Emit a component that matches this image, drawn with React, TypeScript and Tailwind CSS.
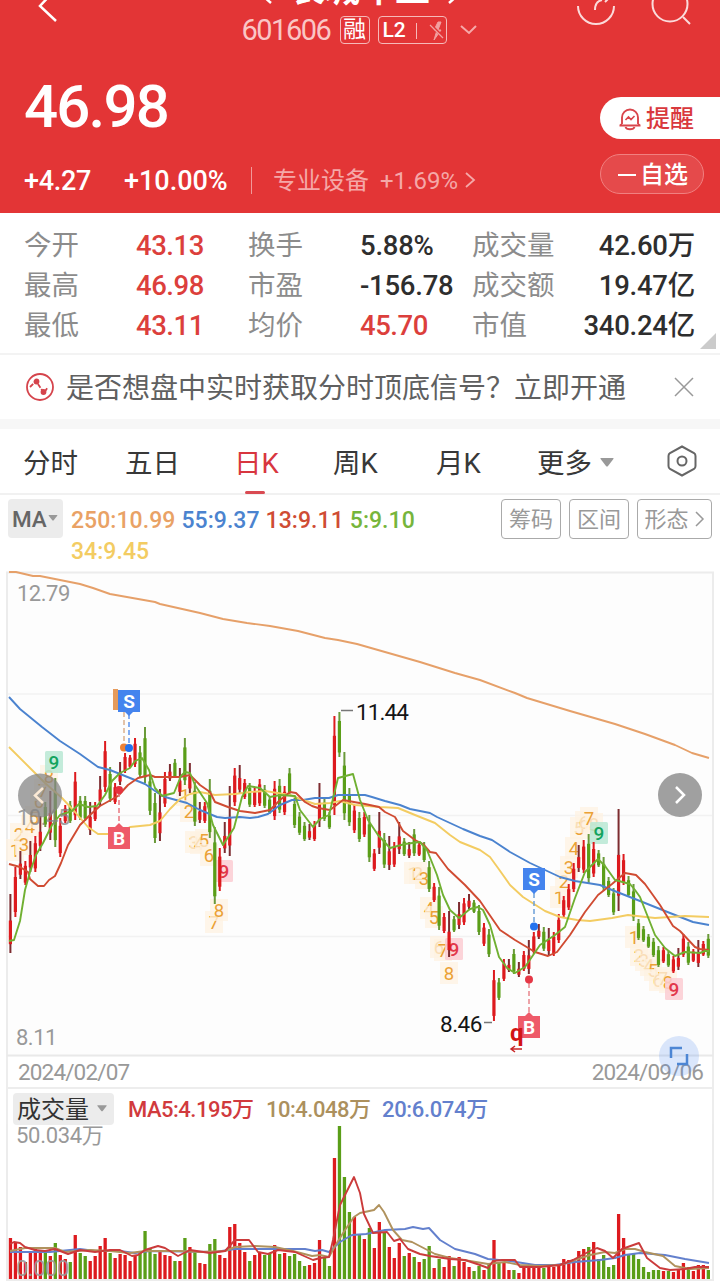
type Candle = [kind: "r" | "d" | "g", high: number, low: number, volumeTop: number];

const STEP = 4.985;
const FIRST_X = 10.4;

// kind: r = up, d = up with long wick, g = down
const candles: Candle[] = [
  ["d", 894, 953, 1238], ["r", 867, 917, 1242], ["d", 851, 879, 1247], ["r", 861, 885, 1262], ["d", 841, 872, 1252],
  ["r", 836, 872, 1248], ["d", 816, 851, 1253], ["g", 802, 827, 1251], ["d", 791, 840, 1256], ["g", 778, 847, 1243],
  ["r", 818, 857, 1255], ["r", 805, 823, 1259], ["g", 801, 823, 1262], ["r", 772, 820, 1235], ["g", 796, 820, 1253],
  ["g", 796, 821, 1256], ["d", 802, 835, 1261], ["r", 802, 821, 1256], ["d", 776, 806, 1246], ["r", 741, 792, 1238],
  ["g", 767, 802, 1253], ["r", 783, 804, 1258], ["d", 762, 785, 1254], ["r", 753, 773, 1255], ["r", 755, 768, 1261],
  ["r", 738, 767, 1256], ["g", 746, 778, 1253], ["g", 727, 783, 1231], ["g", 773, 815, 1248], ["g", 793, 843, 1254],
  ["d", 789, 841, 1252], ["r", 772, 807, 1255], ["d", 764, 781, 1256], ["g", 759, 778, 1261], ["d", 768, 796, 1261],
  ["g", 738, 785, 1238], ["d", 763, 793, 1247], ["g", 782, 826, 1251], ["d", 802, 823, 1263], ["r", 802, 823, 1264],
  ["g", 779, 838, 1244], ["g", 827, 904, 1239], ["r", 848, 891, 1255], ["d", 822, 853, 1258], ["d", 786, 856, 1227],
  ["r", 768, 806, 1224], ["d", 765, 794, 1243], ["r", 779, 799, 1252], ["g", 783, 807, 1261], ["r", 787, 807, 1255],
  ["r", 779, 806, 1252], ["g", 785, 808, 1255], ["g", 796, 814, 1253], ["r", 781, 820, 1245], ["g", 779, 813, 1254],
  ["r", 786, 815, 1253], ["g", 768, 795, 1256], ["g", 798, 828, 1254], ["g", 812, 835, 1261], ["g", 822, 841, 1266],
  ["d", 824, 840, 1265], ["r", 821, 841, 1263], ["d", 783, 827, 1240], ["g", 798, 821, 1257], ["g", 812, 829, 1266],
  ["r", 716, 815, 1158], ["g", 712, 757, 1126], ["g", 752, 820, 1177], ["g", 788, 826, 1212], ["r", 805, 833, 1217],
  ["g", 812, 842, 1235], ["r", 812, 837, 1239], ["g", 815, 862, 1228], ["r", 849, 871, 1248], ["d", 812, 854, 1222],
  ["g", 833, 868, 1232], ["d", 836, 870, 1247], ["r", 842, 867, 1258], ["d", 822, 854, 1243], ["g", 838, 856, 1256],
  ["d", 842, 858, 1253], ["g", 829, 856, 1257], ["r", 842, 856, 1262], ["g", 842, 862, 1259], ["g", 861, 892, 1246],
  ["r", 883, 902, 1268], ["g", 887, 930, 1259], ["r", 913, 933, 1267], ["d", 911, 957, 1256], ["g", 916, 932, 1266],
  ["d", 902, 929, 1257], ["r", 898, 925, 1262], ["d", 894, 909, 1267], ["g", 900, 913, 1271], ["g", 905, 935, 1266],
  ["r", 923, 946, 1270], ["g", 929, 957, 1264], ["r", 970, 1021, 1240], ["g", 978, 1000, 1263], ["r", 959, 981, 1262],
  ["d", 959, 972, 1270], ["g", 949, 974, 1270], ["d", 962, 977, 1273], ["r", 951, 971, 1267], ["d", 940, 974, 1267],
  ["r", 932, 954, 1267], ["d", 924, 939, 1266], ["g", 927, 951, 1268], ["d", 928, 955, 1267], ["r", 932, 956, 1267],
  ["r", 914, 943, 1266], ["r", 896, 917, 1259], ["r", 884, 910, 1260], ["r", 863, 892, 1259], ["d", 845, 872, 1251],
  ["r", 840, 873, 1249], ["g", 834, 883, 1247], ["r", 842, 877, 1242], ["g", 850, 867, 1259], ["g", 857, 891, 1255],
  ["g", 877, 897, 1267], ["g", 888, 915, 1265], ["d", 809, 911, 1214], ["r", 854, 885, 1238], ["g", 876, 897, 1255],
  ["g", 884, 921, 1253], ["g", 919, 940, 1259], ["g", 926, 942, 1267], ["g", 934, 948, 1272], ["g", 938, 957, 1270],
  ["g", 946, 967, 1270], ["r", 947, 963, 1271], ["g", 951, 967, 1271], ["r", 956, 973, 1272], ["d", 948, 970, 1270],
  ["r", 934, 957, 1263], ["g", 942, 965, 1267], ["r", 949, 962, 1271], ["d", 940, 967, 1265], ["r", 941, 956, 1265],
  ["g", 934, 958, 1270],
];

const priceLines = [
  {
    color: "#e6a069",
    points:
      "9,572 16,572 33,576 40,576 80,584 93,588 110,594 155,602 160,604 200,613 223,619 247,623 270,626 298,631 325,638 338,640 357,644 385,652 420,662 455,673 480,680 515,693 527,698 570,711 615,724 645,734 675,745 692,753 709,758",
  },
  {
    color: "#4b83cf",
    points:
      "9,697 20,709 42,727 60,741 80,754 98,767 110,770 130,778 145,784 158,793 165,797 187,803 200,810 217,817 225,818 240,817 250,818 258,817 268,814 280,805 292,800 303,800 315,798 329,798 338,795 365,795 372,797 385,801 400,805 410,809 430,813 437,817 463,829 480,836 492,840 510,852 530,863 545,870 560,877 575,881 600,885 612,890 640,901 670,913 693,922 709,925",
  },
  {
    color: "#f3cc62",
    points:
      "9,747 30,768 45,783 62,798 75,812 88,827 98,834 116,834 130,827 150,825 160,821 170,809 180,799 190,794 200,792 215,795 235,794 250,792 265,791 290,795 300,799 315,804 330,803 340,801 355,805 380,807 398,808 415,815 435,823 450,835 460,842 480,850 490,857 498,868 510,885 523,897 545,911 560,917 577,920 590,921 612,918 628,915 655,918 685,916 709,917",
  },
  {
    color: "#d04b32",
    points:
      "9,864 20,867 28,872 30,879 38,886 44,886 49,880 55,876 61,863 68,845 80,825 90,815 100,806 118,796 128,785 138,778 150,775 155,777 180,777 190,775 200,785 210,792 215,802 228,807 240,811 255,813 270,810 280,800 290,792 296,793 305,802 312,806 318,808 330,810 343,800 365,804 379,807 385,812 395,817 403,831 415,840 423,844 430,852 436,853 448,869 465,885 480,901 500,930 515,940 535,952 548,956 557,952 570,935 585,912 598,895 612,884 625,873 636,875 645,884 660,905 673,926 680,931 695,947 700,949 709,950",
  },
  {
    color: "#70b032",
    points:
      "9,941 14,940 20,921 25,890 30,872 36,855 43,843 52,825 60,815 72,811 79,804 88,807 97,806 105,795 112,781 120,773 130,768 135,761 142,758 149,770 155,788 162,796 174,793 181,776 185,772 190,773 195,785 207,803 213,825 223,845 234,828 242,797 248,786 260,788 270,797 280,795 295,796 300,810 313,827 320,819 329,815 338,778 353,774 360,800 368,820 378,835 390,848 405,844 420,842 427,850 437,875 443,895 450,910 459,918 470,909 478,907 483,910 490,925 499,957 507,968 515,973 525,967 540,945 555,935 565,927 575,898 585,872 598,859 605,866 615,880 630,884 635,890 640,897 655,935 665,948 675,956 685,952 700,953 705,951 709,951",
  },
];

const volumeLines = [
  {
    color: "#6380cd",
    points:
      "10,1252 50,1252 80,1249 95,1251 120,1251 135,1253 150,1251 215,1252 235,1249 305,1249 315,1251 322,1250 329,1252 340,1242 352,1235 366,1234 385,1230 405,1229 413,1227 423,1229 429,1228 440,1240 455,1249 475,1254 488,1259 510,1261 535,1265 555,1265 575,1262 600,1260 615,1258 625,1255 640,1253 665,1255 685,1259 709,1263",
  },
  {
    color: "#b0925d",
    points:
      "10,1251 25,1248 55,1248 65,1252 90,1250 110,1251 130,1253 145,1251 180,1251 200,1252 225,1251 235,1247 255,1246 275,1247 293,1251 312,1256 320,1255 329,1257 335,1246 345,1230 354,1217 360,1213 374,1210 379,1205 384,1212 393,1230 402,1240 412,1242 435,1254 450,1258 470,1261 488,1264 505,1262 520,1265 540,1266 560,1265 575,1260 590,1255 605,1252 615,1253 625,1249 635,1249 645,1252 663,1256 675,1266 690,1269 709,1268",
  },
  {
    color: "#cb3b3b",
    points:
      "10,1244 14,1242 20,1243 25,1247 35,1250 45,1251 55,1249 68,1254 80,1250 95,1252 110,1250 120,1250 132,1256 138,1255 145,1250 158,1246 165,1248 178,1256 190,1250 210,1253 225,1251 235,1240 249,1240 258,1252 268,1254 278,1250 295,1252 313,1260 320,1258 329,1257 333,1240 340,1205 354,1177 360,1193 364,1214 373,1233 387,1232 394,1241 400,1239 408,1249 420,1254 430,1256 450,1259 465,1260 480,1265 488,1268 493,1261 502,1260 515,1260 520,1267 540,1267 560,1265 573,1260 590,1251 597,1248 605,1251 613,1258 622,1249 639,1243 647,1258 660,1268 670,1270 685,1269 695,1267 709,1267",
  },
];

// nine-turn counts drawn above and below the candles
const counts: [label: string, x: number, y: number][] = [
  ["1", 15, 850], ["2", 19, 834], ["3", 24, 844], ["4", 30, 826], ["5", 34, 817], ["6", 39, 801], ["7", 43, 790], ["8", 49, 776],
  ["1", 185, 795], ["2", 189, 811], ["3", 194, 842], ["4", 199, 843], ["5", 204, 840], ["6", 209, 855], ["7", 214, 922], ["8", 219, 910],
  ["1", 413, 873], ["2", 418, 873], ["3", 424, 878], ["4", 429, 908], ["5", 434, 917], ["6", 439, 947], ["7", 443, 950], ["8", 449, 973],
  ["1", 559, 897], ["2", 564, 881], ["3", 569, 867], ["4", 574, 848], ["5", 579, 828], ["6", 584, 822], ["8", 594, 824], ["7", 589, 818],
  ["1", 634, 937], ["2", 639, 955], ["3", 644, 960], ["4", 649, 965], ["5", 653, 970], ["6", 658, 980], ["7", 663, 978], ["8", 668, 982],
];

const quotes = [
  [["今开", "43.13", true], ["换手", "5.88%", false], ["成交量", "42.60万", false]],
  [["最高", "46.98", true], ["市盈", "-156.78", false], ["成交额", "19.47亿", false]],
  [["最低", "43.11", true], ["均价", "45.70", true], ["市值", "340.24亿", false]],
] as [string, string, boolean][][];

function candleColor(kind: Candle[0]) {
  return kind === "g" ? "#5a9e18" : "#dd1a1e";
}

function Candles() {
  return (
    <g>
      {candles.map(([kind, high, low], i) => {
        const x = FIRST_X + i * STEP;
        const h = low - high;
        const wick = kind === "d" ? "#7d2c30" : kind === "g" ? "#6a9a3a" : "#dd1a1e";
        const top = kind === "d" ? high + h * 0.45 : high + h * 0.2;
        const height = kind === "d" ? h * 0.4 : h * 0.7;
        return (
          <g key={i}>
            <rect x={x - 1} y={high} width={2} height={h} fill={wick} />
            <rect x={x - 1.6} y={top} width={3.2} height={height} fill={candleColor(kind)} />
          </g>
        );
      })}
    </g>
  );
}

function Lines({ lines }: { lines: { color: string; points: string }[] }) {
  return (
    <g fill="none" strokeWidth="1.900" strokeLinejoin="round">
      {lines.map((line) => (
        <polyline key={line.color} points={line.points} stroke={line.color} />
      ))}
    </g>
  );
}

function NineTag({ x, y, up }: { x: number; y: number; up?: boolean }) {
  return (
    <g>
      <rect x={x - 9} y={y - 11} width="18" height="22" rx="1.5" fill={up ? "#b9e8d3" : "#fbcdd2"} fillOpacity="0.85" />
      <text x={x} y={y + 7} fontSize="19" fontWeight="500" textAnchor="middle" fill={up ? "#14a35e" : "#e2384a"}>9</text>
    </g>
  );
}

function Trade({ x, y, label, fill }: { x: number; y: number; label: string; fill: string }) {
  const tip = label === "S" ? `M${x - 5} ${y + 10}h10l-5 5z` : `M${x - 5} ${y - 10}h10l-5 -5z`;
  return (
    <g fill={fill}>
      <path d={tip} />
      <rect x={x - 11} y={y - 11} width="22" height="22" />
      <text x={x} y={y + 7} fontSize="19" fontWeight="700" textAnchor="middle" fill="#fff">{label}</text>
    </g>
  );
}

function PriceChart() {
  return (
    <svg viewBox="0 571 720 486" className="block h-[486px] w-full" fontFamily="Roboto, sans-serif">
      <path d="M7 1057V572.500H713V1057" fill="#fdfdfd" stroke="#ececec" strokeWidth="2" />
      <path d="M8 694H712M8 815.500H712M8 936.500H712" stroke="#f2f2f2" strokeWidth="1.500" />
      <path d="M7 1055.500H713" stroke="#e9e9e9" strokeWidth="2" />
      <g fontSize="18.500" textAnchor="middle">
        {counts.map(([label, x, y], i) => (
          <g key={i}>
            <rect x={x - 9} y={y - 11} width="18" height="22" fill="#fdf1e2" fillOpacity="0.75" />
            <text x={x} y={y + 6.500} fill="#eba135">{label}</text>
          </g>
        ))}
      </g>
      <NineTag x={54} y={762} up />
      <NineTag x={224} y={871} />
      <NineTag x={454} y={949} />
      <NineTag x={599} y={833} up />
      <NineTag x={674} y={989} />
      <Candles />
      <Lines lines={priceLines} />

      <rect x="113" y="689" width="5" height="21" fill="#e69b5c" />
      <g strokeDasharray="5 3" strokeWidth="1.500">
        <path d="M124 712V745" stroke="#dcb08c" />
        <path d="M129 714V745" stroke="#5b92ee" />
        <path d="M119 792V826" stroke="#e8767f" />
        <path d="M534 893V923" stroke="#6b9fd8" />
        <path d="M529 983V1014" stroke="#e8858c" />
      </g>
      <circle cx="124" cy="747.500" r="4" fill="#ed8136" />
      <circle cx="129" cy="748" r="4" fill="#2372ee" />
      <circle cx="119" cy="790" r="4" fill="#e5323f" />
      <circle cx="534" cy="926.500" r="4" fill="#2372ee" />
      <circle cx="529" cy="979.500" r="4" fill="#e53746" />
      <Trade x={129} y={701} label="S" fill="#4484ee" />
      <Trade x={119} y={838} label="B" fill="#ee5a69" />
      <Trade x={534} y={879} label="S" fill="#4484ee" />
      <Trade x={529} y={1027} label="B" fill="#ee5a69" />
      <text x="510" y="1041" fontSize="24" fontWeight="700" fill="#d21414">q</text>
      <path d="M522 1049H511M515 1046l-4 3 4 3" fill="none" stroke="#c92626" strokeWidth="1.500" />

      <path d="M341 710.500H353M484 1022.500H492" stroke="#777" strokeWidth="1.500" />
      <circle cx="40" cy="795.500" r="22" fill="#858585" fillOpacity="0.75" />
      <circle cx="680" cy="795" r="22" fill="#a0a0a0" />
      <g fill="none" stroke="#fff" strokeWidth="2.500">
        <path d="M43 788l-8 7.500 8 7.500" stroke="#fbe9d4" />
        <path d="M676 787l8 8-8 8" />
      </g>
      <g fontSize="22" fill="#999" letterSpacing="-0.500">
        <text x="17" y="601">12.79</text>
        <text x="17" y="825" fill="#858585" fillOpacity="0.8">10.45</text>
        <text x="16" y="1045">8.11</text>
      </g>
      <g fontSize="22.500" fill="#151515">
        <text x="356" y="720" letterSpacing="-0.900">11.44</text>
        <text x="440" y="1032" letterSpacing="-0.500">8.46</text>
      </g>
    </svg>
  );
}

function VolumeChart() {
  return (
    <svg viewBox="0 1124 720 158" className="block h-[158px] w-full">
      <path d="M7 1124V1280H713V1124" fill="none" stroke="#ececec" strokeWidth="2" />
      {candles.map(([kind, , , top], i) => (
        <rect key={i} x={FIRST_X + i * STEP - 1.6} y={top} width={3.3} height={1279 - top} fill={candleColor(kind)} />
      ))}
      <Lines lines={volumeLines} />
      <text x="16" y="1276" fontSize="22" letterSpacing="-0.500" fill="#999" fillOpacity="0.9" fontFamily="Roboto, sans-serif">0.000</text>
    </svg>
  );
}

function Header() {
  return (
    <header className="h-[213px] overflow-hidden bg-[#e33536] text-white">
      <div className="grid h-[46px] grid-cols-[150px_1fr_150px]">
        <svg viewBox="0 0 80 46" className="h-[46px] w-20" fill="none" stroke="#fff" strokeWidth="2.500">
          <path d="M54 -9L40 6l16 15" />
        </svg>
        <div className="flex flex-col items-center">
          <div className="-mt-[32px] flex h-[46px] items-center gap-[18px] text-[35px] font-bold leading-[46px]">
            <svg viewBox="0 0 12 20" className="mt-2.5 h-5 w-3" fill="none" stroke="#fff" strokeWidth="2.500"><path d="M10 2L3 10l8 7" /></svg>
            长城军工
            <svg viewBox="0 0 12 20" className="mt-2.5 h-5 w-3" fill="none" stroke="#fff" strokeWidth="2.500"><path d="M2 2l7 8-8 7" /></svg>
          </div>
          <div className="flex h-[32px] items-center gap-2">
            <span className="w-[90px] whitespace-nowrap text-[29px] leading-8 tracking-[-1.500px] text-[#fac6c5]">601606</span>
            <span className="flex h-7 w-[30px] items-center justify-center rounded border border-[#f6b9b9] text-[23px]">融</span>
            <span className="flex h-7 w-[69px] items-center rounded border border-[#f6b9b9] pl-1 pt-px text-[21px] font-medium">
              L2
              <span className="ml-2.5 h-4 w-px bg-[#f6b9b9]" />
              <svg viewBox="0 0 16 20" className="ml-3 h-5 w-4" fill="#f2a1a1" stroke="#f2a1a1">
                <path d="M9 1L5 9h3L5 19l7-10H9l3-8z" />
                <path d="M1 3l14 14" stroke="#e33536" strokeWidth="2.500" />
                <path d="M1 4l13 13" strokeWidth="1.300" />
              </svg>
            </span>
            <svg viewBox="0 0 20 12" className="ml-1 h-3 w-5" fill="none" stroke="#f6a9a9" strokeWidth="2"><path d="M2 2l8 7 7-7" /></svg>
          </div>
        </div>
        <svg viewBox="570 0 150 46" className="h-[46px] w-[150px]" fill="none" stroke="#fbdada" strokeWidth="2">
          <path d="M578 6a18 18 0 0 0 36 0M595 10c0-6 2-9 7-10M605 2l3-3" />
          <circle cx="670" cy="4" r="17.500" />
          <path d="M683 17l7 7" />
        </svg>
      </div>

      <div className="flex h-[96px] items-center justify-between">
        <strong className="mt-[25px] pl-6 text-[60px] font-medium leading-none tracking-[-1.800px]">46.98</strong>
        <span className="mt-[48px] flex h-[42px] w-[120px] items-center rounded-l-full bg-white pl-[17px] pt-0.5 text-[24px] font-medium leading-none text-[#d9383d]">
          <svg viewBox="0 0 26 26" className="mr-[3px] h-[26px] w-[26px]" fill="none" stroke="#d9454b" strokeWidth="1.900">
            <path d="M5 18V11.500a8 8 0 0 1 16 0V18M2.500 19.500h21M5 18l-2 1.500M21 18l2 1.500" />
            <path d="M8.500 21c1 3 8 3 9 0" />
            <path d="M8.500 14l3-3 2.500 2.500 3.500-3.500" strokeWidth="1.600" />
          </svg>
          提醒
        </span>
      </div>

      <div className="flex h-[71px] items-center pl-6 pr-4 text-[27px] font-medium">
        <span className="w-[100px] pt-[8px] tracking-[-0.300px]">+4.27</span>
        <span className="w-[127px] whitespace-nowrap pt-[8px]">+10.00%</span>
        <span className="mt-[6px] h-[27px] w-px bg-[#f19999]" />
        <span className="pl-[21px] pt-[7px] text-[24px] font-normal text-[#f5a8a8]">专业设备</span>
        <span className="pl-[11px] pt-[7px] text-[24px] font-normal text-[#f5a8a8]">+1.69%</span>
        <svg viewBox="0 0 12 20" className="ml-[7px] mt-[4px] h-5 w-3" fill="none" stroke="#f5a8a8" strokeWidth="1.800"><path d="M1 3l8 7-8 7" /></svg>
        <span className="-mt-[7px] ml-auto flex h-10 w-[104px] items-center justify-center rounded-full border border-[#f18080] bg-[#e54a4b] pl-0.5 pt-0.5 text-[24px] font-medium leading-none">
          <span className="mr-[4px] h-0.5 w-[18px] bg-white" />
          自选
        </span>
      </div>
    </header>
  );
}

function Quotes() {
  return (
    <section className="relative h-[140px] pl-6 pr-[25px] pt-[13px] text-[27.500px]">
      {quotes.map((row) => (
        <div key={row[0][0]} className="flex h-10 items-center leading-10">
          {row.map(([label, value, red], i) => (
            <div key={label} className={i < 2 ? "flex w-[224px]" : "flex flex-1 justify-between"}>
              <span className={i < 2 ? "w-28 shrink-0 text-[#8c8c8c]" : "text-[#8c8c8c]"}>{label}</span>
              <span className={red ? "font-medium tracking-[-0.450px] text-[#dc3f3c]" : "font-medium tracking-[-0.250px] text-[#2e2e2e]"}>{value}</span>
            </div>
          ))}
        </div>
      ))}
      <svg viewBox="0 0 16 16" className="absolute bottom-1 right-1 h-4 w-4"><path d="M16 0v16H0z" fill="#cbcbcb" /></svg>
    </section>
  );
}

function Caret({ className }: { className: string }) {
  return (
    <svg viewBox="0 0 14 9" className={className} fill="#999"><path d="M1 0h12q1 0 .4 1L8 8q-1 1-2 0L.6 1Q0 0 1 0z" /></svg>
  );
}

function Tabs() {
  return (
    <nav className="grid h-[66px] grid-cols-[102px_109px_99px_103px_101px_129px_1fr] items-center border-b-2 border-[#f1f1f1] pl-[23px] text-[27.500px] text-[#383838]">
      <span className="pt-[5px]">分时</span>
      <span className="pt-[5px]">五日</span>
      <span className="relative pt-[5px] text-[#d8363f]">
        日K
        <i className="absolute -bottom-[10px] left-[11px] h-[3px] w-5 rounded-full bg-[#d94a52]" />
      </span>
      <span className="pt-[5px]">周K</span>
      <span className="pt-[5px]">月K</span>
      <span className="flex items-center gap-2 pt-[5px]">更多<Caret className="-mt-0.5 h-[9px] w-3.5" /></span>
      <svg viewBox="0 0 30 32" className="ml-px h-8 w-[30px]" fill="none" stroke="#666" strokeWidth="2">
        <path d="M15 1.500L27 8q1.500 1 1.500 3v10q0 2-1.500 3L15 30.500 3 24q-1.500-1-1.500-3V11q0-2 1.500-3z" />
        <circle cx="15" cy="16" r="4.500" />
      </svg>
    </nav>
  );
}

function Indicators() {
  return (
    <div className="flex h-[76px] items-start pl-2 pr-2 pt-[3px] text-[22px] font-medium">
      <span className="mt-px flex h-[39px] w-[55px] items-center gap-px rounded bg-[#ececec] pl-1 pt-0.5 text-[22.500px] text-[#666]">
        MA<Caret className="-mt-1 h-1.5 w-2.5" />
      </span>
      <div className="w-[410px] pl-2 pt-[7px] text-[23px] leading-[31px] tracking-[0.050px]">
        <div className="flex gap-[6px] whitespace-nowrap">
          <span className="text-[#e9a265]">250:10.99</span>
          <span className="text-[#4b83cf]">55:9.37</span>
          <span className="text-[#cf4c34]">13:9.11</span>
          <span className="text-[#76b53b]">5:9.10</span>
        </div>
        <span className="text-[#f3cc62]">34:9.45</span>
      </div>
      <div className="ml-auto flex gap-2 pt-px font-normal text-[#999]">
        <span className="flex h-10 w-[60px] items-center justify-center rounded border border-[#aaa]">筹码</span>
        <span className="flex h-10 w-[60px] items-center justify-center rounded border border-[#aaa]">区间</span>
        <span className="flex h-10 w-[75px] items-center justify-center gap-1.5 rounded border border-[#aaa]">
          形态
          <svg viewBox="0 0 10 18" className="h-[18px] w-2.5" fill="none" stroke="#999" strokeWidth="1.500"><path d="M1 2l7 7-7 7" /></svg>
        </span>
      </div>
    </div>
  );
}

export default function App() {
  return (
    <main className="h-[1282px] w-[720px] overflow-hidden bg-white font-['Roboto','Noto_Sans_CJK_SC',sans-serif]">
      <Header />
      <Quotes />
      <section className="flex h-[66px] items-center border-t-2 border-[#f3f3f3] pl-[25px] pr-[26px]">
        <svg viewBox="0 0 30 30" className="mr-[11px] h-[30px] w-[30px]" fill="none" stroke="#d5444c" strokeWidth="1.800">
          <circle cx="15" cy="15" r="13" />
          <path d="M5 15l6-6 8 12 4-6" strokeDasharray="4.500 1.500" />
          <circle cx="11.500" cy="9.500" r="2" fill="#d5444c" />
          <circle cx="18.500" cy="20" r="2" fill="#d5444c" />
        </svg>
        <span className="whitespace-nowrap pt-1 text-[28px] leading-10 text-[#606060]">是否想盘中实时获取分时顶底信号？立即开通</span>
        <svg viewBox="0 0 20 20" className="ml-auto h-5 w-5" stroke="#999" strokeWidth="1.500"><path d="M1 1l18 18M19 1L1 19" /></svg>
      </section>
      <div className="h-2.5 bg-[#f7f7f7]" />
      <Tabs />
      <Indicators />
      <PriceChart />
      <div className="relative mx-1.5 flex h-8 items-center justify-between border-x-2 border-b-2 border-[#ededed] pl-2.5 pr-[9px] pt-0.5 text-[22.500px] tracking-[-0.850px] text-[#999]">
        <span>2024/02/07</span>
        <span>2024/09/06</span>
        <span className="absolute -top-[21px] right-[13px] flex h-10 w-10 items-center justify-center rounded-full bg-[#4c85f0]/20">
          <svg viewBox="0 0 20 20" className="h-5 w-5" fill="none" stroke="#4d86d4" strokeWidth="2.500"><path d="M2 12V2h11M18 8v10H8" /></svg>
        </span>
      </div>
      <div className="mx-1.5 flex h-[35px] items-center border-x-2 border-[#ededed] pl-[5px] pt-[4px] text-[22px] font-medium">
        <span className="flex h-[32px] w-[101px] items-center gap-2 rounded bg-[#ececec] pl-1 pt-0.5 text-[24px] font-normal text-[#333]">
          成交量<Caret className="-mt-0.5 h-[7px] w-2.5" />
        </span>
        <span className="ml-[14px] w-[138px] pt-0.5 tracking-[-0.500px] text-[#d13a3d]">MA5:4.195万</span>
        <span className="w-[116px] pt-0.5 tracking-[-0.500px] text-[#ac905d]">10:4.048万</span>
        <span className="pt-0.5 tracking-[-0.350px] text-[#6380cd]">20:6.074万</span>
      </div>
      <div className="relative">
        <VolumeChart />
        <span className="absolute left-4 top-px text-[22px] leading-[22px] tracking-[-0.300px] text-[#999]">50.034万</span>
      </div>
    </main>
  );
}
